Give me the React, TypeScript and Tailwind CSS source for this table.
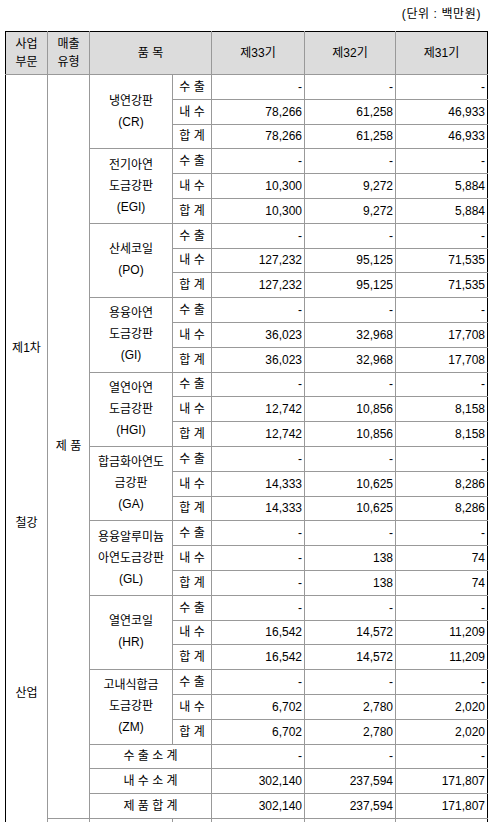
import React from "react";

type Group = { name: string[]; ex: string[]; dom: string[]; sum: string[] };

const D = ["-", "-", "-"];
const groups: Group[] = [
  { name: ["냉연강판", "(CR)"], ex: D, dom: ["78,266", "61,258", "46,933"], sum: ["78,266", "61,258", "46,933"] },
  { name: ["전기아연", "도금강판", "(EGI)"], ex: D, dom: ["10,300", "9,272", "5,884"], sum: ["10,300", "9,272", "5,884"] },
  { name: ["산세코일", "(PO)"], ex: D, dom: ["127,232", "95,125", "71,535"], sum: ["127,232", "95,125", "71,535"] },
  { name: ["용융아연", "도금강판", "(GI)"], ex: D, dom: ["36,023", "32,968", "17,708"], sum: ["36,023", "32,968", "17,708"] },
  { name: ["열연아연", "도금강판", "(HGI)"], ex: D, dom: ["12,742", "10,856", "8,158"], sum: ["12,742", "10,856", "8,158"] },
  { name: ["합금화아연도", "금강판", "(GA)"], ex: D, dom: ["14,333", "10,625", "8,286"], sum: ["14,333", "10,625", "8,286"] },
  { name: ["용융알루미늄", "아연도금강판", "(GL)"], ex: D, dom: ["-", "138", "74"], sum: ["-", "138", "74"] },
  { name: ["열연코일", "(HR)"], ex: D, dom: ["16,542", "14,572", "11,209"], sum: ["16,542", "14,572", "11,209"] },
  { name: ["고내식합금", "도금강판", "(ZM)"], ex: D, dom: ["6,702", "2,780", "2,020"], sum: ["6,702", "2,780", "2,020"] },
];

const bd = "border border-[#999999] p-0";
const num = `${bd} text-right pr-[2px]`;
const numLast = `${bd} text-right pr-[2px] border-r-black`;

function NumCells({ v }: { v: string[] }) {
  return (
    <>
      <td className={num}>{v[0]}</td>
      <td className={num}>{v[1]}</td>
      <td className={numLast}>{v[2]}</td>
    </>
  );
}

export default function App() {
  return (
    <div
      className="w-[491px] h-[822px] overflow-hidden bg-white text-black text-[12px]"
      style={{ fontFamily: '"Liberation Sans", "Noto Sans CJK KR", sans-serif' }}
    >
      <div className="h-[31px] flex items-center justify-end pr-[10px] pb-[4px] tracking-[0.6px]">(단위 : 백만원)</div>
      <table className="ml-[5px] w-[482px] table-fixed border-collapse">
        <colgroup>
          <col className="w-[42px]" />
          <col className="w-[42px]" />
          <col className="w-[83px]" />
          <col className="w-[39px]" />
          <col className="w-[93px]" />
          <col className="w-[91px]" />
          <col className="w-[92px]" />
        </colgroup>
        <thead>
          <tr className="h-[43px] bg-[#dcdcdc]">
            <th className={`${bd} font-normal leading-[18px] border-t-black border-l-black`}>
              사업
              <br />
              부문
            </th>
            <th className={`${bd} font-normal leading-[18px] border-t-black`}>
              매출
              <br />
              유형
            </th>
            <th colSpan={2} className={`${bd} font-normal border-t-black`}>
              품 목
            </th>
            <th className={`${bd} font-normal border-t-black`}>제33기</th>
            <th className={`${bd} font-normal border-t-black`}>제32기</th>
            <th className={`${bd} font-normal border-t-black border-r-black`}>제31기</th>
          </tr>
        </thead>
        <tbody>
          {groups.map((g, i) => (
            <React.Fragment key={i}>
              <tr className="h-[24.8px]">
                {i === 0 && (
                  <td rowSpan={33} className={`${bd} border-l-black align-top text-center`}>
                    <div className="flex flex-col items-center pt-[264px] leading-[18px]">
                      <span>제1차</span>
                      <span className="mt-[157px]">철강</span>
                      <span className="mt-[152px]">산업</span>
                    </div>
                  </td>
                )}
                {i === 0 && (
                  <td rowSpan={30} className={`${bd} text-center`}>
                    제 품
                  </td>
                )}
                <td rowSpan={3} className={`${bd} text-center`}>
                  <div className="flex flex-col items-center">
                    {g.name.map((n, k) => (
                      <div key={k} className="h-[21px] leading-[21px] whitespace-nowrap">
                        {n}
                      </div>
                    ))}
                  </div>
                </td>
                <td className={`${bd} text-center`}>수 출</td>
                <NumCells v={g.ex} />
              </tr>
              <tr className="h-[24.8px]">
                <td className={`${bd} text-center`}>내 수</td>
                <NumCells v={g.dom} />
              </tr>
              <tr className="h-[24.8px]">
                <td className={`${bd} text-center`}>합 계</td>
                <NumCells v={g.sum} />
              </tr>
            </React.Fragment>
          ))}
          <tr className="h-[24.8px]">
            <td colSpan={2} className={`${bd} text-center`}>수 출 소 계</td>
            <NumCells v={D} />
          </tr>
          <tr className="h-[24.8px]">
            <td colSpan={2} className={`${bd} text-center`}>내 수 소 계</td>
            <NumCells v={["302,140", "237,594", "171,807"]} />
          </tr>
          <tr className="h-[24.8px]">
            <td colSpan={2} className={`${bd} text-center`}>제 품 합 계</td>
            <NumCells v={["302,140", "237,594", "171,807"]} />
          </tr>
          <tr className="h-[24.8px]">
            <td className={bd}></td>
            <td className={bd}></td>
            <td className={bd}></td>
            <td className={bd}></td>
            <td className={bd}></td>
            <td className={`${bd} border-r-black`}></td>
          </tr>
          <tr className="h-[24.8px]">
            <td className={bd}></td>
            <td className={bd}></td>
            <td className={bd}></td>
            <td className={bd}></td>
            <td className={bd}></td>
            <td className={`${bd} border-r-black`}></td>
          </tr>
        </tbody>
      </table>
    </div>
  );
}
